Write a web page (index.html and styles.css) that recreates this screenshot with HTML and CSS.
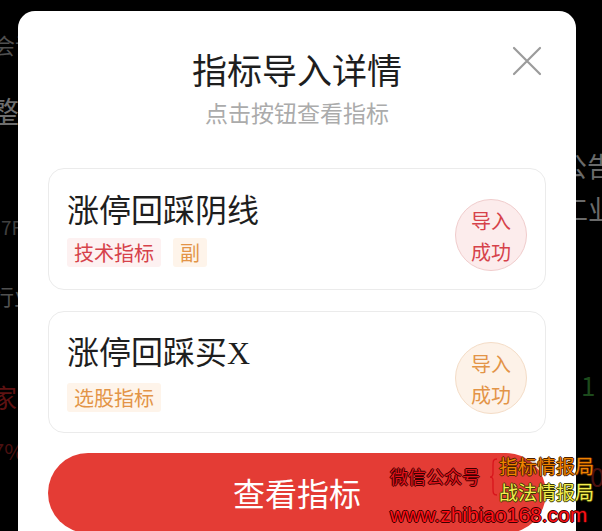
FILE: index.html
```html
<!DOCTYPE html>
<html lang="zh">
<head>
<meta charset="utf-8">
<link rel="stylesheet" href="styles.css">
</head>
<body>
<div class="bg">
  <div class="bg-left">
    <div class="bgt t1">会议</div>
    <div class="bgt t2">整</div>
    <div class="bgt t3">7F</div>
    <div class="bgt t4">行业</div>
    <div class="bgt t5">家</div>
    <div class="bgt t6">7%</div>
  </div>
  <div class="bg-right">
    <div class="bgt r1">公告</div>
    <div class="bgt r2">工业</div>
    <div class="bgt r3">1</div>
    <div class="bgt r4">0</div>
  </div>
</div>

<div class="modal">
  <svg class="close" width="30" height="30" viewBox="0 0 30 30"><path d="M2 2 L28 28 M28 2 L2 28" stroke="#9b9b9b" stroke-width="2.2" fill="none" stroke-linecap="round"/></svg>
  <h1 class="title">指标导入详情</h1>
  <p class="subtitle">点击按钮查看指标</p>

  <div class="card">
    <div class="card-main">
      <div class="card-title">涨停回踩阴线</div>
      <div class="tags">
        <span class="tag tag-red">技术指标</span>
        <span class="tag tag-orange">副</span>
      </div>
    </div>
    <div class="badge badge-red">导入<br>成功</div>
  </div>

  <div class="card card-second">
    <div class="card-main">
      <div class="card-title">涨停回踩买<span class="latin">X</span></div>
      <div class="tags">
        <span class="tag tag-orange">选股指标</span>
      </div>
    </div>
    <div class="badge badge-orange">导入<br>成功</div>
  </div>

  <div class="btn">查看指标</div>
</div>

<div class="watermark">
  <div class="wm-row">
    <span class="wm-label">微信公众号</span>
    <svg class="brace" width="10" height="38" viewBox="0 0 10 38"><path d="M8 1 C4 1 4 3 4 8 L4 15 C4 18 3 19 1 19 C3 19 4 20 4 23 L4 30 C4 35 4 37 8 37" stroke="#d8141c" stroke-width="1.3" fill="none"/></svg>
    <div class="wm-names">
      <span class="wm-orange">指标情报局</span>
      <span class="wm-yellow">战法情报局</span>
    </div>
  </div>
  <div class="wm-url">www.zhibiao168.com</div>
</div>
</body>
</html>
```

FILE: styles.css
```css
* { box-sizing: border-box; }
html, body {
  margin: 0;
  padding: 0;
}
body {
  width: 602px;
  height: 531px;
  overflow: hidden;
  background: #000;
  position: relative;
  font-family: "Noto Sans CJK SC", "Noto Sans", sans-serif;
}

.bg {
  display: flex;
  justify-content: space-between;
  height: 531px;
}
.bg-left { width: 20px; }
.bg-right { width: 39px; }
.bgt { white-space: nowrap; }
.t1 { font-size: 22px; line-height: 26px; margin-top: 31px; margin-left: -7px; color: #505050; }
.t2 { font-size: 30px; line-height: 34px; margin-top: 36px; margin-left: -11px; color: #6e6e6e; }
.t3 { font-size: 19px; line-height: 24px; margin-top: 88px; margin-left: 1px; color: #404040; }
.t4 { font-size: 22px; line-height: 26px; margin-top: 43px; margin-left: -8px; color: #505050; }
.t5 { font-size: 26px; line-height: 30px; margin-top: 74px; margin-left: -9px; color: #5e1212; }
.t6 { font-size: 22px; line-height: 26px; margin-top: 25px; margin-left: -8px; color: #4a1010; }
.r1 { font-size: 27px; line-height: 30px; margin-top: 151px; margin-left: -3px; color: #6a6a6a; }
.r2 { font-size: 27px; line-height: 30px; margin-top: 13px; margin-left: -2px; color: #6a6a6a; }
.r3 { font-size: 26px; line-height: 30px; margin-top: 146px; margin-left: 18px; color: #1c4a1c; }
.r4 { font-size: 26px; line-height: 30px; margin-top: 61px; margin-left: 27px; color: #4a1010; }

.modal {
  position: absolute;
  left: 18px;
  top: 11px;
  width: 558px;
  height: 570px;
  background: #fff;
  border-radius: 17px;
  padding: 38px 30px 0;
}
.close {
  position: absolute;
  left: 494px;
  top: 35px;
}
.title {
  margin: 0;
  text-align: center;
  font-size: 35px;
  line-height: 40px;
  font-weight: 400;
  color: #1e1e1e;
}
.subtitle {
  margin: 9px 0 0;
  text-align: center;
  font-size: 23px;
  line-height: 28px;
  color: #ababab;
}

.card {
  margin-top: 42px;
  height: 122px;
  border: 1px solid #ebebeb;
  border-radius: 16px;
  padding: 21px 18px 22px 18px;
  display: flex;
  justify-content: space-between;
  align-items: center;
}
.card-second { margin-top: 21px; }
.card-title {
  font-size: 32px;
  line-height: 36px;
  color: #1e1e1e;
}
.latin {
  font-family: "Liberation Serif", serif;
}
.tags {
  margin-top: 12px;
  display: flex;
  gap: 12px;
}
.tag {
  font-size: 20px;
  line-height: 29px;
  padding: 0 7px;
  border-radius: 3px;
}
.tag-red { background: #fdf1f1; color: #d6424a; }
.tag-orange { background: #fef4ea; color: #e39447; }

.badge {
  width: 72px;
  height: 72px;
  border-radius: 50%;
  margin-top: 13px;
  font-size: 20px;
  line-height: 31px;
  text-align: center;
  padding-top: 5px;
}
.badge-red { background: #fcecec; border: 1px solid #f0cccc; color: #d6424a; }
.badge-orange { background: #fdf2e8; border: 1px solid #f4dcc6; color: #e39447; }

.btn {
  margin-top: 20px;
  height: 80px;
  border-radius: 40px;
  background: #e43c35;
  color: #fff;
  font-size: 32px;
  line-height: 78px;
  text-align: center;
}

.watermark {
  position: absolute;
  left: 390px;
  top: 453px;
  width: 212px;
}
.wm-row {
  display: flex;
  align-items: flex-start;
}
.wm-label {
  margin-top: 12px;
  font-size: 18px;
  line-height: 22px;
  color: #e3141c;
  text-shadow: 1px 0 #3a0000, -1px 0 #3a0000, 0 1px #3a0000, 0 -1px #3a0000;
}
.brace {
  margin: 5px 0 0 9px;
}
.wm-names {
  display: flex;
  flex-direction: column;
  font-size: 19px;
  line-height: 26px;
}
.wm-orange {
  color: #f08400;
  text-shadow: 1px 0 #4a2000, -1px 0 #4a2000, 0 1px #4a2000, 0 -1px #4a2000;
}
.wm-yellow {
  color: #f4ee50;
  text-shadow: 1px 0 #3a3a00, -1px 0 #3a3a00, 0 1px #3a3a00, 0 -1px #3a3a00;
}
.wm-url {
  margin-top: -1px;
  font-family: "Liberation Sans", sans-serif;
  font-size: 21px;
  line-height: 22px;
  color: #ff1218;
  text-shadow: 1px 0 #3a0000, -1px 0 #3a0000, 0 1px #3a0000, 0 -1px #3a0000;
}
```
